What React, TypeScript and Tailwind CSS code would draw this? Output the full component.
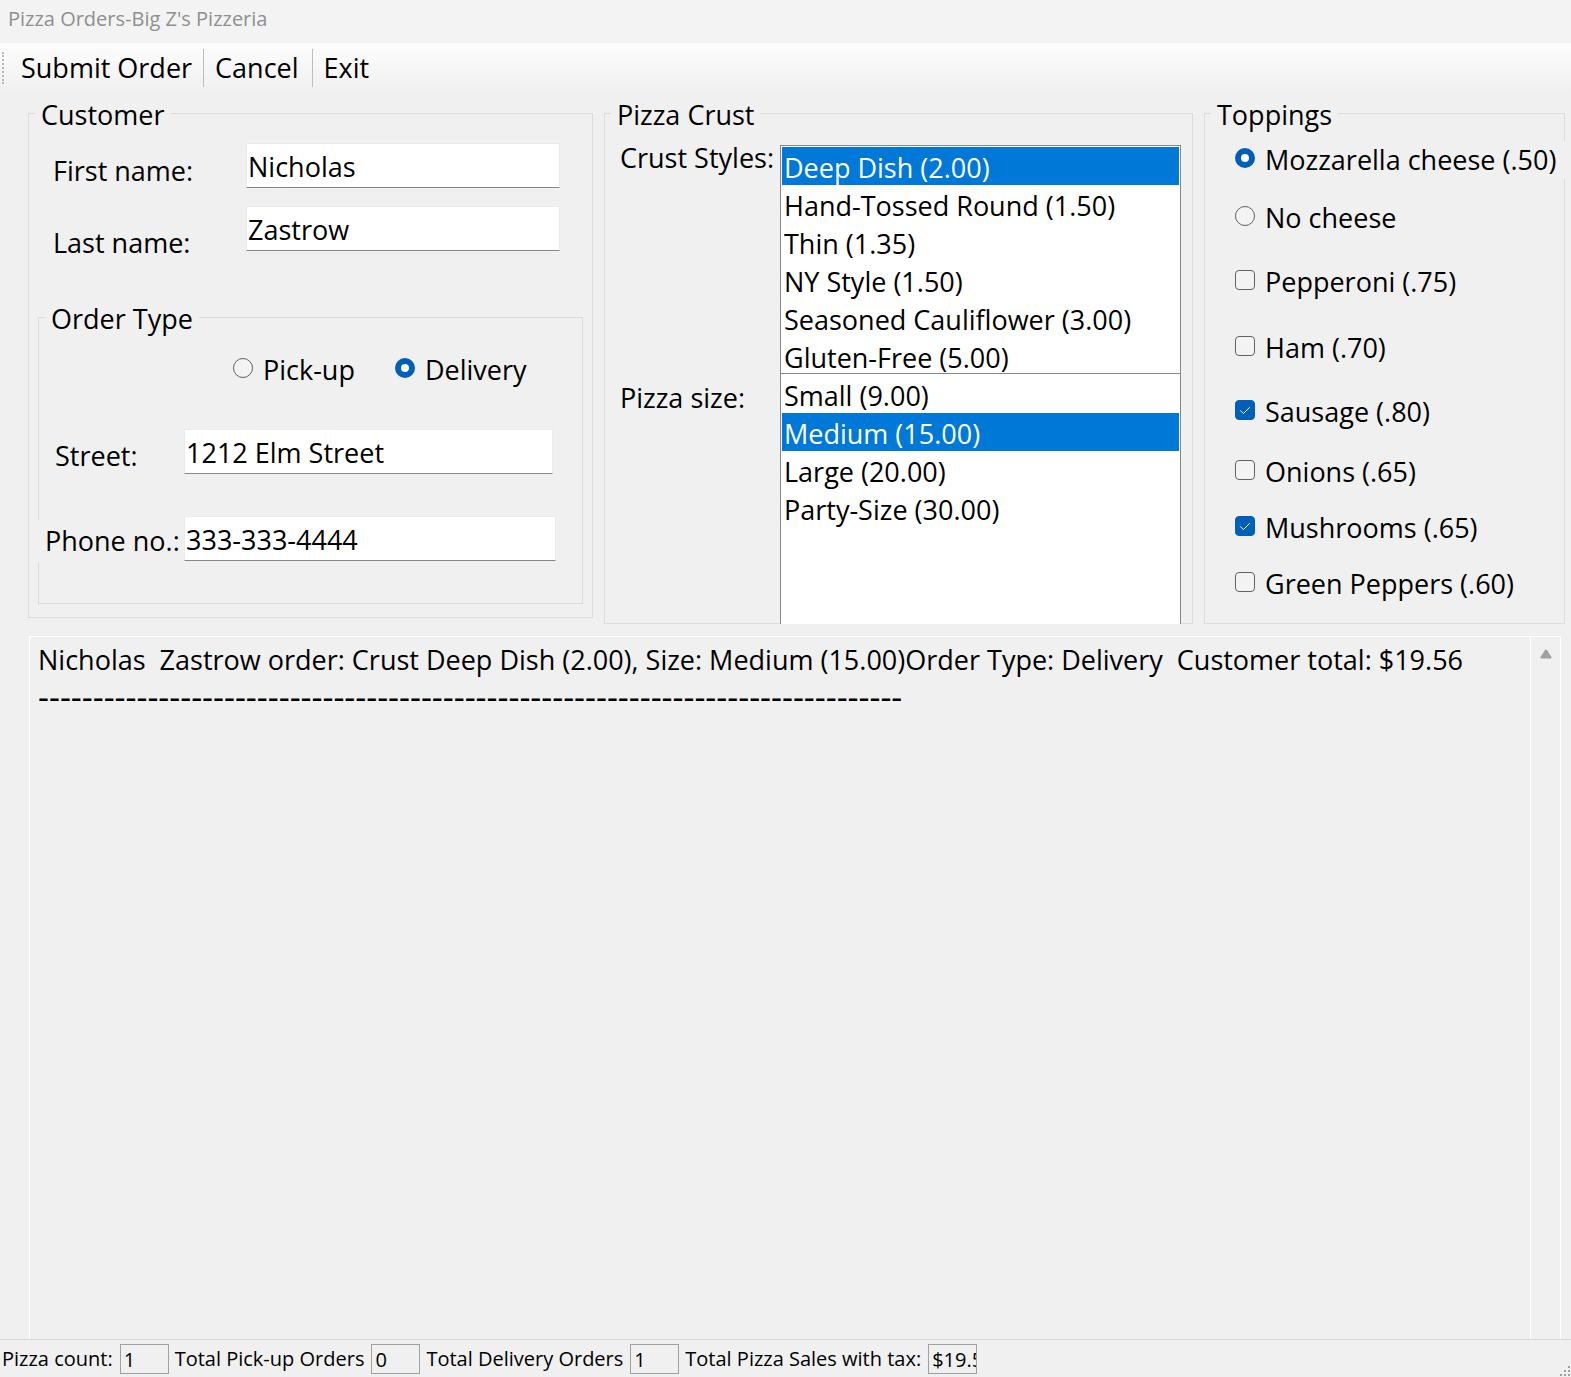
import type { ReactNode } from "react";

const crusts = [
  "Deep Dish (2.00)",
  "Hand-Tossed Round (1.50)",
  "Thin (1.35)",
  "NY Style (1.50)",
  "Seasoned Cauliflower (3.00)",
  "Gluten-Free (5.00)",
];

const sizes = ["Small (9.00)", "Medium (15.00)", "Large (20.00)", "Party-Size (30.00)"];

const toppings = [
  { label: "Pepperoni (.75)", gap: "mt-[26px]" },
  { label: "Ham (.70)", gap: "mt-7" },
  { label: "Sausage (.80)", gap: "mt-[26px]", checked: true },
  { label: "Onions (.65)", gap: "mt-[22px]" },
  { label: "Mushrooms (.65)", gap: "mt-[18px]", checked: true },
  { label: "Green Peppers (.60)", gap: "mt-[18px]" },
];

const totals = [
  { label: "Pizza count:", value: "1" },
  { label: "Total Pick-up Orders", value: "0" },
  { label: "Total Delivery Orders", value: "1" },
  { label: "Total Pizza Sales with tax:", value: "$19.56" },
];

function GroupBox({ title, className, children }: { title: string; className?: string; children: ReactNode }) {
  return (
    <fieldset className={`min-w-0 border border-[#dcdcdc] ${className ?? ""}`}>
      <legend className="ml-1.5 px-1.5 pt-1 leading-[34px]">{title}</legend>
      {children}
    </fieldset>
  );
}

function Radio({ name, label, checked }: { name: string; label: string; checked?: boolean }) {
  return (
    <label className="flex items-start gap-2.5 whitespace-nowrap leading-[38px]">
      <input
        type="radio"
        name={name}
        defaultChecked={checked}
        className="mt-[7px] size-5 shrink-0 appearance-none rounded-full border border-[#626262] bg-[#f3f3f3] checked:border-[6px] checked:border-[#005fb8] checked:bg-white"
      />
      {label}
    </label>
  );
}

function Check({ label, gap, checked }: { label: string; gap: string; checked?: boolean }) {
  return (
    <label className={`flex items-start gap-2.5 whitespace-nowrap leading-[38px] ${gap}`}>
      <span className="relative mt-[7px] flex size-5 shrink-0">
        <input
          type="checkbox"
          defaultChecked={checked}
          className="peer size-5 appearance-none rounded border border-[#626262] bg-[#f3f3f3] checked:border-[#005fb8] checked:bg-[#005fb8]"
        />
        <svg viewBox="0 0 20 20" className="pointer-events-none absolute inset-0 hidden peer-checked:block" fill="none" stroke="white">
          <path d="M5.2 10.4 8.4 13.6 14.8 7.2" />
        </svg>
      </span>
      {label}
    </label>
  );
}

function TextField({ id, value }: { id: string; value: string }) {
  return (
    <input
      id={id}
      type="text"
      defaultValue={value}
      className="h-[45px] min-w-0 flex-1 border border-[#ebebeb] border-b-[#868686] bg-white px-px pt-px outline-none"
    />
  );
}

function ListBox({ id, items, selected, className }: { id: string; items: string[]; selected: string; className: string }) {
  return (
    <select
      id={id}
      size={6}
      defaultValue={selected}
      className={`w-full overflow-hidden rounded-none border border-b-0 border-[#828790] bg-white p-px outline-none ${className}`}
    >
      {items.map((item) => (
        <option
          key={item}
          className="h-[38px] px-0.5 pt-0.5 pb-0 leading-[34px] checked:bg-linear-to-r checked:from-[#0078d7] checked:to-[#0078d7] checked:[-webkit-text-fill-color:white]"
        >
          {item}
        </option>
      ))}
    </select>
  );
}

export default function App() {
  return (
    <div className="flex min-h-screen flex-col overflow-hidden bg-[#f0f0f0] font-['Open_Sans','Noto_Sans',sans-serif] text-[27px] text-black">
      <header className="h-[43px] bg-[#f3f3f3] px-2 text-[20px] leading-[38px] text-[#8f8f8f]">
        Pizza Orders-Big Z's Pizzeria
      </header>

      <nav className="flex h-[50px] items-center bg-linear-to-b from-[#fdfdfd] to-[#f0f0f0] pl-0.5">
        <span className="mr-[17px] h-8 border-l-2 border-dotted border-[#b8b8b8]" />
        <button type="button" className="pr-[11px]">Submit Order</button>
        <button type="button" className="border-l border-[#bdbdbd] pr-[13px] pl-[11px] leading-[38px]">Cancel</button>
        <button type="button" className="border-l border-[#bdbdbd] px-[11px] leading-[38px]">Exit</button>
      </nav>

      <form className="grid grid-cols-[565fr_589fr_361fr] gap-x-[11px] pt-px pr-1.5 pl-7">
        {/* Customer */}
        <GroupBox title="Customer" className="mb-1.5">
          <div className="flex flex-col gap-4 pt-[11px] pr-8 pl-6">
            <div className="flex items-start">
              <label htmlFor="first" className="w-[193px] shrink-0 pt-[9px] leading-[38px]">First name:</label>
              <TextField id="first" value="Nicholas" />
            </div>
            <div className="flex items-start">
              <label htmlFor="last" className="w-[193px] shrink-0 pt-[18px] leading-[38px]">Last name:</label>
              <TextField id="last" value="Zastrow" />
            </div>
          </div>

          <div className="px-[9px] pt-9 pb-[13px]">
            <GroupBox title="Order Type" className="h-[306px]">
              <div className="flex gap-10 pt-[15px] pl-[194px]">
                <Radio name="type" label="Pick-up" />
                <Radio name="type" label="Delivery" checked />
              </div>
              <div className="flex items-start pt-10 pr-[29px]">
                <label htmlFor="street" className="w-[145px] shrink-0 pt-2 pl-4 leading-[38px]">Street:</label>
                <TextField id="street" value="1212 Elm Street" />
              </div>
              <div className="-ml-1 flex items-start pt-[41px] pr-[26px]">
                <label htmlFor="phone" className="mt-1 w-[149px] shrink-0 bg-[#f0f0f0] pl-2.5 whitespace-nowrap leading-[42px]">Phone no.:</label>
                <TextField id="phone" value="333-333-4444" />
              </div>
            </GroupBox>
          </div>
        </GroupBox>

        {/* Crust and size */}
        <GroupBox title="Pizza Crust">
          <div className="-mb-0.5 grid grid-cols-[160px_1fr] pt-[13px] pr-[11px] pl-[15px]">
            <label htmlFor="crust" className="leading-[26px]">Crust Styles:</label>
            <ListBox id="crust" items={crusts} selected={crusts[0]} className="h-[228px]" />
            <label htmlFor="size" className="pt-1.5 leading-[38px]">Pizza size:</label>
            <ListBox id="size" items={sizes} selected={sizes[1]} className="h-[251px]" />
          </div>
        </GroupBox>

        {/* Toppings */}
        <GroupBox title="Toppings">
          <div className="flex flex-col pt-[9px] pl-[30px]">
            <div className="-mr-px bg-[#f0f0f0]">
              <Radio name="cheese" label="Mozzarella cheese (.50)" checked />
            </div>
            <div className="pt-5">
              <Radio name="cheese" label="No cheese" />
            </div>
            {toppings.map((topping) => (
              <Check key={topping.label} {...topping} />
            ))}
          </div>
        </GroupBox>
      </form>

      {/* Order log */}
      <section className="mt-3 mr-2.5 ml-[29px] flex flex-1 border border-b-0 border-white">
        <div className="min-w-0 flex-1 overflow-hidden pt-1 pl-2 leading-[38px]">
          <p className="whitespace-pre">
            {"Nicholas  Zastrow order: Crust Deep Dish (2.00), Size: Medium (15.00)Order Type: Delivery  Customer total: $19.56"}
          </p>
          <p className="text-[34px] leading-[34px] whitespace-pre">{"-".repeat(79)}</p>
        </div>
        <div className="flex w-[30px] justify-center border-l border-white pt-3">
          <svg viewBox="0 0 12 10" className="h-2.5 w-3" fill="#a0a0a0">
            <path d="M5 1Q6 0 7 1L11.5 8Q12 9.500 10.500 9.500H1.500Q0 9.500 .5 8Z" />
          </svg>
        </div>
      </section>

      <footer className="flex h-[38px] items-center border-t border-[#d7d7d7] pt-px pl-0.5 text-[20px]">
        {totals.map(({ label, value }) => (
          <div key={label} className="flex items-center">
            <span className="pr-[7px] whitespace-nowrap">{label}</span>
            <output className="mr-1.5 h-[30px] w-[49px] overflow-hidden border border-[#a0a0a0] pl-[3px] leading-[30px]">{value}</output>
          </div>
        ))}
        <svg viewBox="0 0 12 12" className="ml-auto size-3 self-end" fill="#a0a0a0">
          <path d="M9 1h2v2H9zM5 5h2v2H5zM9 5h2v2H9zM1 9h2v2H1zM5 9h2v2H5zM9 9h2v2H9z" />
        </svg>
      </footer>
    </div>
  );
}
